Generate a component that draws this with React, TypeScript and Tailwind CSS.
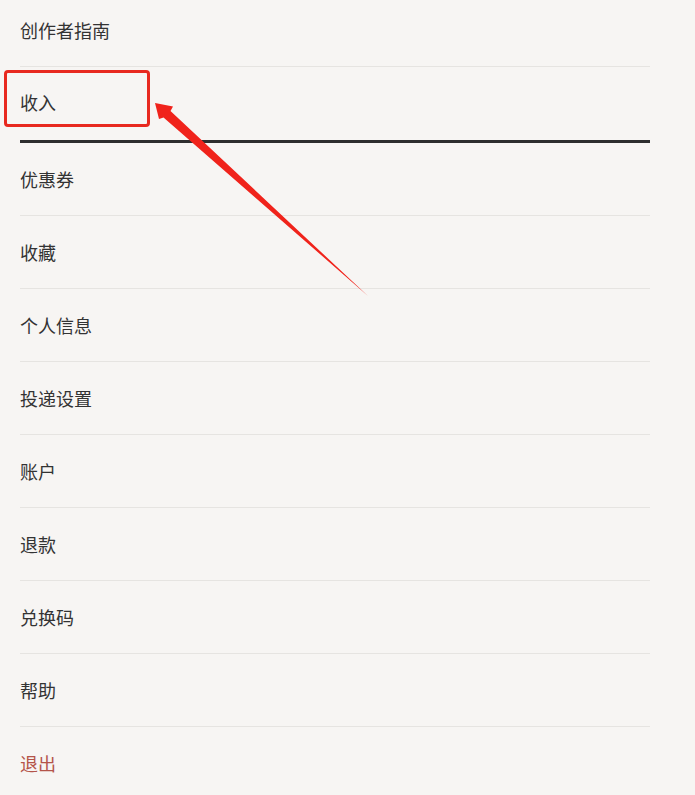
const items = [
  "创作者指南",
  "收入",
  "优惠券",
  "收藏",
  "个人信息",
  "投递设置",
  "账户",
  "退款",
  "兑换码",
  "帮助",
];

export default function App() {
  return (
    <div
      className="relative h-[795px] w-full overflow-hidden bg-[#f7f5f3]"
      style={{ fontFamily: '"Noto Sans CJK SC", "Noto Sans", sans-serif' }}
    >
      <ul className="mx-[20px] -mt-[6px] w-[630px]">
        {items.map((label, i) => (
          <li
            key={label}
            className={
              i === 1
                ? "flex h-[76px] items-center border-b-[3px] border-[#2e2e2e] pb-[2px] text-[18px] text-[#333]"
                : "flex h-[73px] items-center border-b border-[#e6e4e1] text-[18px] text-[#333]"
            }
          >
            {label}
          </li>
        ))}
        <li className="flex h-[72px] items-center text-[18px] text-[#b4544a]">退出</li>
      </ul>

      {/* annotation overlay */}
      <div className="absolute left-[4px] top-[70px] h-[57px] w-[146px] rounded-[4px] border-[3px] border-[#e8291f]" />
      <svg className="pointer-events-none absolute left-0 top-0" width="695" height="795">
        <polygon
          points="155,103 173,106.5 170.5,111 368,296 163.5,117.5 159,119"
          fill="#f0231b"
        />
      </svg>
    </div>
  );
}
